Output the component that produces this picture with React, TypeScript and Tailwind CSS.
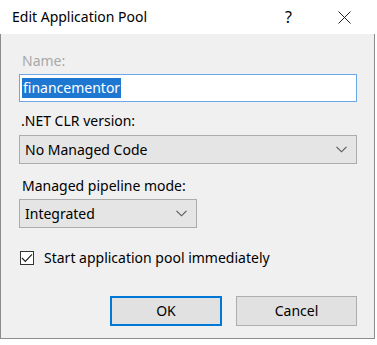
import React from "react";

const Chevron = () => (
  <svg width="11" height="7" viewBox="0 0 11 7" className="shrink-0">
    <path d="M0.5 0.8 L5.5 5.8 L10.5 0.8" fill="none" stroke="#555" strokeWidth="1.1" />
  </svg>
);

const SelectBox = ({ value, width }: { value: string; width: string }) => (
  <div
    className={`${width} h-[29px] flex items-center justify-between pl-[5px] pr-[9px] bg-[#e5e5e5] border border-[#acacac] text-[14px] text-black`}
  >
    <span>{value}</span>
    <Chevron />
  </div>
);

export default function App() {
  return (
    <div className="w-[377px] h-[345px] bg-white overflow-hidden font-['Noto_Sans',sans-serif] text-black">
      <div className="w-[375px] h-[339px] flex flex-col">
        {/* title bar */}
        <div className="h-[34px] shrink-0 bg-white flex items-center pl-[12px] pr-[24px]">
          <span className="text-[14px] leading-none">Edit Application Pool</span>
          <span className="ml-auto text-[16px] leading-none mr-[46px]">?</span>
          <svg width="13" height="13" viewBox="0 0 13 13">
            <path d="M0.5 0.5 L12.5 12.5 M12.5 0.5 L0.5 12.5" stroke="#222" strokeWidth="1" />
          </svg>
        </div>

        {/* body */}
        <div className="flex-1 flex flex-col bg-[#f0f0f0] border-l border-r border-b border-[#8c8c8c] pl-[18px] pr-[17px] pt-[18px] text-[14px] leading-[18px]">
          <div className="text-[#a8a8a8] pl-[3px]">Name:</div>
          <div className="mt-[4px] h-[28px] w-[338px] bg-white border border-[#6aa6e8] flex items-center pl-[2px]">
            <span className="bg-[#1e78d2] text-white px-[1px] leading-[20px]">financementor</span>
          </div>

          <div className="mt-[10px] pl-[2px]">.NET CLR version:</div>
          <div className="mt-[5px]">
            <SelectBox value="No Managed Code" width="w-[338px]" />
          </div>

          <div className="mt-[13px] pl-[3px]">Managed pipeline mode:</div>
          <div className="mt-[4px]">
            <SelectBox value="Integrated" width="w-[178px]" />
          </div>

          <div className="mt-[21px] flex items-center gap-[10px] pl-[1px]">
            <div className="w-[14px] h-[14px] border border-[#333] bg-white flex items-center justify-center">
              <svg width="12" height="10" viewBox="0 0 12 10">
                <path d="M1 5 L4.3 8.3 L11 1.3" fill="none" stroke="#222" strokeWidth="1.2" />
              </svg>
            </div>
            <span>Start application pool immediately</span>
          </div>

          <div className="mt-[29px] flex justify-end gap-[14px]">
            <button className="w-[112px] h-[30px] bg-[#e1e1e1] border-2 border-[#0078d7] text-[14px]">
              OK
            </button>
            <button className="w-[121px] h-[30px] bg-[#e1e1e1] border border-[#adadad] text-[14px]">
              Cancel
            </button>
          </div>
        </div>
      </div>
    </div>
  );
}
